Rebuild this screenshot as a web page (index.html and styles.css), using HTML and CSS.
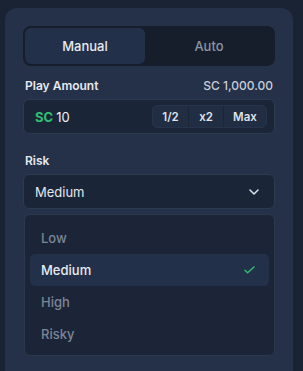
FILE: index.html
```html
<!DOCTYPE html>
<html lang="en">
<head>
  <meta charset="UTF-8" />
  <meta name="viewport" content="width=device-width, initial-scale=1" />
  <title>Bet Panel</title>
  <link rel="stylesheet" href="styles.css">
</head>
<body>

  <div class="panel">
    <div class="tabs">
      <div class="tab active">Manual</div>
      <div class="tab">Auto</div>
    </div>

    <div class="label-row">
      <span class="label">Play Amount</span>
      <span class="balance">SC 1,000.00</span>
    </div>
    <div class="amount">
      <div class="amount-value"><span class="coin">SC</span>10</div>
      <div class="quick">
        <span>1/2</span>
        <span>x2</span>
        <span>Max</span>
      </div>
    </div>

    <div class="label-row risk-label">
      <span class="label">Risk</span>
    </div>
    <div class="select">
      <span>Medium</span>
      <svg class="chevron" width="10" height="6" viewBox="0 0 10 6">
        <path d="M1 1l4 4 4-4" fill="none" stroke="#dfe4ec" stroke-width="1.5" stroke-linecap="round" stroke-linejoin="round"/>
      </svg>
    </div>

    <div class="options">
      <div class="option">Low</div>
      <div class="option selected">
        <span>Medium</span>
        <svg width="11" height="8" viewBox="0 0 11 8">
          <path d="M1 4.2l2.6 2.6L10 1" fill="none" stroke="#2fbf71" stroke-width="1.4" stroke-linecap="round" stroke-linejoin="round"/>
        </svg>
      </div>
      <div class="option">High</div>
      <div class="option">Risky</div>
    </div>
  </div>

</body>
</html>
```

FILE: styles.css
```css
* {
  margin: 0;
  padding: 0;
  box-sizing: border-box;
}

html, body {
  width: 100%;
  height: 100%;
  overflow: hidden;
  background: #1a2334;
  font-family: Inter, "Noto Sans", sans-serif;
  font-size: 12px;
  color: #e3e7ee;
}

.panel {
  margin: 8px 10px 0 5px;
  padding: 18px 18px 0;
  background: #243148;
  border-radius: 12px 12px 0 0;
  height: calc(100% - 8px);
}

.tabs {
  display: grid;
  grid-template-columns: 120px 1fr;
  height: 40px;
  padding: 2px;
  background: #161e2b;
  border-radius: 8px;
}

.tab {
  display: flex;
  align-items: center;
  justify-content: center;
  font-size: 13px;
  font-weight: 500;
  color: #8a94a6;
  border-radius: 6px;
}

.tab.active {
  background: #23304a;
  color: #e8ebf0;
}

.label-row {
  display: flex;
  justify-content: space-between;
  align-items: center;
  height: 14px;
  margin: 12px 2px 7px;
}

.label {
  font-weight: 600;
  color: #e6e9ef;
}

.balance {
  font-weight: 500;
  color: #c9cfd9;
}

.amount {
  display: flex;
  align-items: center;
  justify-content: space-between;
  height: 35px;
  padding: 0 7px 0 11px;
  background: #1b2538;
  border: 1px solid #2c3a50;
  border-radius: 6px;
}

.amount-value {
  font-size: 13px;
  color: #eef1f5;
}

.coin {
  color: #2fbf71;
  font-weight: 700;
  margin-right: 3px;
}

.quick {
  display: flex;
  height: 23px;
  background: #212d42;
  border: 1px solid #263349;
  border-radius: 5px;
  overflow: hidden;
}

.quick span {
  display: flex;
  align-items: center;
  justify-content: center;
  font-size: 11.5px;
  font-weight: 600;
  color: #dde2ea;
  width: 35px;
  border-left: 1px solid #1b2538;
}

.quick span:first-child {
  border-left: none;
}

.quick span:last-child {
  width: 43px;
}

.risk-label {
  margin-top: 19px;
}

.select {
  display: flex;
  align-items: center;
  justify-content: space-between;
  height: 35px;
  padding: 0 15px 0 11px;
  background: #1b2538;
  border: 1px solid #2c3a50;
  border-radius: 6px;
  font-size: 13px;
  color: #e3e7ee;
}

.options {
  margin: 5px 0 0 1px;
  padding: 7px 5px 5px;
  background: #1b2537;
  border: 1px solid #2a374c;
  border-radius: 6px;
}

.option {
  display: flex;
  align-items: center;
  justify-content: space-between;
  height: 32px;
  padding: 0 14px 0 11px;
  font-size: 13px;
  font-weight: 500;
  color: #7b8598;
  border-radius: 5px;
}

.option.selected {
  background: #233049;
  color: #e8ebf0;
}
```
